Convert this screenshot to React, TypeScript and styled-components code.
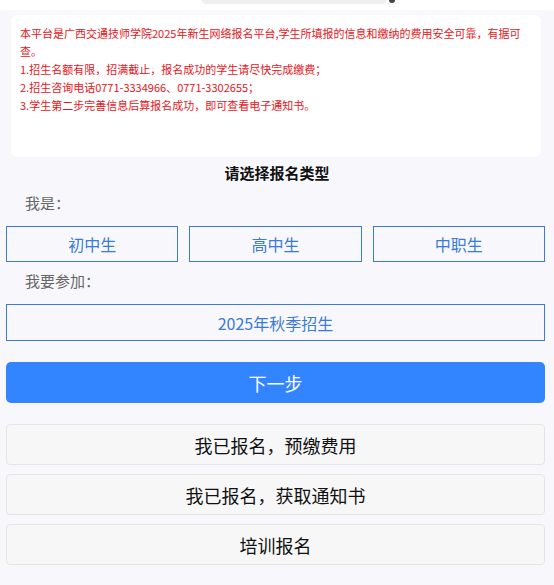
import styled, { createGlobalStyle } from "styled-components";

const GlobalStyle = createGlobalStyle`
  html, body {
    margin: 0;
    padding: 0;
    background: #f8f8fc;
    font-family: "Noto Sans CJK SC", "Noto Sans", sans-serif;
  }
`;

const Page = styled.div`
  width: 554px;
  min-height: 585px;
  background: #f8f8fc;
`;

const TopStrip = styled.div`
  height: 10px;
  background: #ffffff;
  overflow: hidden;
  display: flex;
  align-items: flex-end;
  padding-left: 202px;
  gap: 3px;
`;

const SearchStub = styled.div`
  width: 184px;
  height: 30px;
  margin-bottom: 6px;
  background: #efefef;
  border-radius: 4px;
`;

const DotStub = styled.div`
  width: 6px;
  height: 6px;
  border-radius: 50%;
  background: #444;
  margin-bottom: 7px;
`;

const Notice = styled.div`
  margin: 5px 13px 0 11px;
  height: 142px;
  box-sizing: border-box;
  padding: 9px 12px 0 9px;
  background: #ffffff;
  border-radius: 6px;
  color: #e8141b;
  font-size: 11px;
  line-height: 18px;
`;

const Title = styled.div`
  margin-top: 5px;
  text-align: center;
  font-size: 15px;
  font-weight: bold;
  color: #111;
  line-height: 22px;
`;

const Label = styled.div`
  padding-left: 25px;
  margin-top: 9px;
  font-size: 15px;
  color: #666;
  line-height: 20px;
`;

const Options = styled.div<{ $cols: number }>`
  display: grid;
  grid-template-columns: repeat(${(p) => p.$cols}, 1fr);
  gap: 11px;
  padding: 0 9px 0 6px;
  margin-top: 13px;
`;

const Option = styled.div<{ $h: number }>`
  height: ${(p) => p.$h}px;
  box-sizing: border-box;
  border: 1px solid #3a7bd5;
  color: #3a7bd5;
  font-size: 16px;
  display: flex;
  align-items: center;
  justify-content: center;
`;

const Actions = styled.div`
  display: flex;
  flex-direction: column;
  gap: 9px;
  padding: 0 9px 0 6px;
  margin-top: 21px;
`;

const NextButton = styled.div`
  height: 41px;
  margin-bottom: 12px;
  background: #3385ff;
  border-radius: 5px;
  color: #fff;
  font-size: 18px;
  display: flex;
  align-items: center;
  justify-content: center;
`;

const GrayButton = styled.div`
  height: 41px;
  box-sizing: border-box;
  background: #f7f7f7;
  border: 1px solid #e5e5e5;
  border-radius: 4px;
  color: #111;
  font-size: 18px;
  display: flex;
  align-items: center;
  justify-content: center;
`;

export default function App() {
  return (
    <Page>
      <GlobalStyle />
      <TopStrip>
        <SearchStub />
        <DotStub />
      </TopStrip>
      <Notice>
        本平台是广西交通技师学院2025年新生网络报名平台,学生所填报的信息和缴纳的费用安全可靠，有据可查。
        <br />
        1.招生名额有限，招满截止，报名成功的学生请尽快完成缴费；
        <br />
        2.招生咨询电话0771-3334966、0771-3302655；
        <br />
        3.学生第二步完善信息后算报名成功，即可查看电子通知书。
      </Notice>
      <Title>请选择报名类型</Title>
      <Label>我是：</Label>
      <Options $cols={3}>
        <Option $h={36}>初中生</Option>
        <Option $h={36}>高中生</Option>
        <Option $h={36}>中职生</Option>
      </Options>
      <Label>我要参加：</Label>
      <Options $cols={1}>
        <Option $h={37}>2025年秋季招生</Option>
      </Options>
      <Actions>
        <NextButton>下一步</NextButton>
        <GrayButton>我已报名，预缴费用</GrayButton>
        <GrayButton>我已报名，获取通知书</GrayButton>
        <GrayButton>培训报名</GrayButton>
      </Actions>
    </Page>
  );
}
